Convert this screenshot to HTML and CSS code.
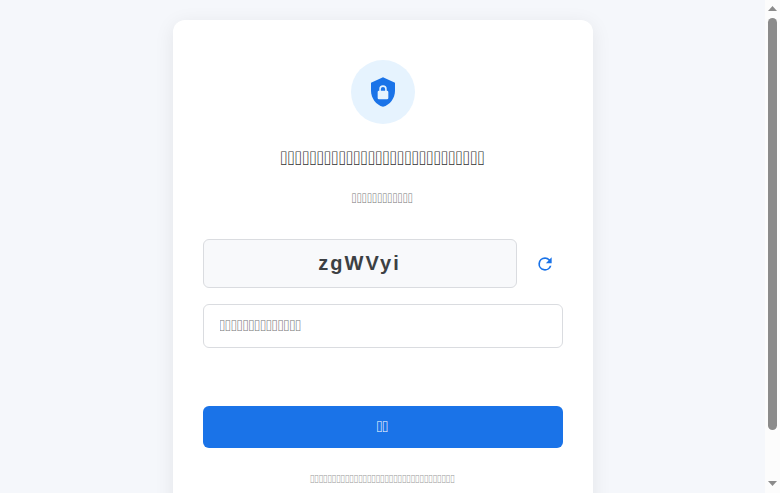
FILE: index.html
```html
<!DOCTYPE html>
<html lang="zh">
<head>
    <meta charset="UTF-8">
    <meta name="viewport" content="width=device-width, initial-scale=1.0">
    <title>Captcha</title>
    <link rel="stylesheet" href="styles.css">
</head>
<body>
    <div class="page">
        <main class="container">
            <div class="logo">
                <svg class="logo-icon" viewBox="0 0 24 24" aria-hidden="true">
                    <path class="shield" d="M12 1 3 5v6c0 5.550 3.840 10.740 9 12 5.160-1.260 9-6.450 9-12V5z"/>
                    <path class="lock" d="M15 11h-.2V9.800a2.800 2.800 0 0 0-5.600 0V11H9a1 1 0 0 0-1 1v4.500a1 1 0 0 0 1 1h6a1 1 0 0 0 1-1V12a1 1 0 0 0-1-1zm-4.600 0V9.800a1.600 1.600 0 0 1 3.200 0V11z"/>
                </svg>
            </div>
            <h1>&#xE000;&#xE000;&#xE000;&#xE000;&#xE000;&#xE000;&#xE000;&#xE000;&#xE000;&#xE000;&#xE000;&#xE000;&#xE000;&#xE000;&#xE000;&#xE000;&#xE000;&#xE000;&#xE000;&#xE000;&#xE000;&#xE000;&#xE000;&#xE000;&#xE000;&#xE000;&#xE000;&#xE000;</h1>
            <p class="subtitle"><label for="captchaInput">&#xE000;&#xE000;&#xE000;&#xE000;&#xE000;&#xE000;&#xE000;&#xE000;&#xE000;&#xE000;&#xE000;&#xE000;</label></p>
            <form class="captcha-form">
                <div class="captcha-row">
                    <div class="captcha-code">zgWVyi</div>
                    <button type="button" class="refresh" aria-label="Refresh">
                        <svg class="refresh-icon" viewBox="0 0 24 24" aria-hidden="true">
                            <path d="M17.650 6.350A7.958 7.958 0 0 0 12 4a8 8 0 1 0 7.730 10h-2.080A6 6 0 1 1 12 6c1.660 0 3.140.69 4.220 1.780L13 11h7V4z"/>
                        </svg>
                    </button>
                </div>
                <input type="text" id="captchaInput" class="captcha-input" placeholder="&#xE000;&#xE000;&#xE000;&#xE000;&#xE000;&#xE000;&#xE000;&#xE000;&#xE000;&#xE000;&#xE000;&#xE000;&#xE000;&#xE000;">
                <p class="message" role="alert"></p>
                <button type="button" class="submit">&#xE000;&#xE000;</button>
            </form>
            <p class="footer">&#xE000;&#xE000;&#xE000;&#xE000;&#xE000;&#xE000;&#xE000;&#xE000;&#xE000;&#xE000;&#xE000;&#xE000;&#xE000;&#xE000;&#xE000;&#xE000;&#xE000;&#xE000;&#xE000;&#xE000;&#xE000;&#xE000;&#xE000;&#xE000;&#xE000;&#xE000;&#xE000;&#xE000;&#xE000;&#xE000;&#xE000;&#xE000;&#xE000;</p>
        </main>
    </div>
    <div class="scrollbar" aria-hidden="true">
        <svg class="arrow" viewBox="0 0 15 17"><path d="M7.500 6 12 11H3z"/></svg>
        <div class="track"><div class="thumb"></div></div>
        <svg class="arrow" viewBox="0 0 15 17"><path d="M3 5h9l-4.500 5z"/></svg>
    </div>
</body>
</html>
```
FILE: styles.css
```css
* {
    box-sizing: border-box;
    margin: 0;
    padding: 0;
}
body {
    font-family: OpenSymbol, "Liberation Sans", Arial, sans-serif;
    background-color: #f5f7fb;
    color: #333;
    height: 100vh;
    display: flex;
    overflow: hidden;
}
.page {
    flex: 1;
    padding: 20px;
    overflow: hidden;
}
.container {
    background-color: white;
    width: 100%;
    max-width: 420px;
    margin: 0 auto;
    padding: 40px 30px;
    border-radius: 12px;
    box-shadow: 0 4px 20px rgba(0, 0, 0, 0.08);
    text-align: center;
}
.logo {
    width: 64px;
    height: 64px;
    margin: 0 auto 22px;
    border-radius: 50%;
    background-color: #e6f3fe;
    display: flex;
    justify-content: center;
    align-items: center;
}
.logo-icon {
    width: 32px;
    height: 32px;
}
.shield {
    fill: #1a73e8;
}
.lock {
    fill: #e6f3fe;
}
h1 {
    font-size: 20px;
    font-weight: 500;
    line-height: 28px;
    margin-bottom: 16px;
}
.subtitle {
    font-size: 14px;
    line-height: 20px;
    color: #777;
    margin-bottom: 29px;
}
.captcha-row {
    display: flex;
    align-items: center;
    gap: 10px;
    margin-bottom: 16px;
}
.captcha-code {
    flex: 1;
    padding: 12px;
    border: 1px solid #dadce0;
    border-radius: 6px;
    background-color: #f8f9fb;
    color: #3c4043;
    font-family: "Liberation Sans", Arial, sans-serif;
    font-size: 20px;
    font-weight: bold;
    line-height: 23px;
    letter-spacing: 2px;
}
.refresh {
    width: 36px;
    height: 36px;
    border: none;
    background: none;
    cursor: pointer;
    display: flex;
    justify-content: center;
    align-items: center;
}
.refresh-icon {
    width: 20px;
    height: 20px;
    fill: #1a73e8;
}
.captcha-input {
    display: block;
    width: 100%;
    height: 44px;
    padding: 14px 16px 12px;
    border: 1px solid #dadce0;
    border-radius: 6px;
    font-family: inherit;
    font-size: 16px;
}
.captcha-input::placeholder {
    color: #757575;
}
.message {
    min-height: 20px;
    margin: 14px 0 24px;
    font-size: 14px;
    color: #d93025;
}
.submit {
    width: 100%;
    height: 42px;
    padding-top: 2px;
    border: none;
    border-radius: 6px;
    background-color: #1a73e8;
    color: white;
    font-family: inherit;
    font-size: 16px;
    cursor: pointer;
}
.submit:hover {
    background-color: #1765cc;
}
.footer {
    margin-top: 25px;
    font-size: 12px;
    line-height: 16px;
    color: #999;
}
.scrollbar {
    width: 15px;
    background-color: #fcfcfc;
    display: flex;
    flex-direction: column;
}
.arrow {
    width: 15px;
    height: 17px;
    fill: #8b8b8b;
}
.track {
    flex: 1;
    padding: 1px 3px 0;
}
.thumb {
    height: 90%;
    border-radius: 5px;
    background-color: #8b8b8b;
}
```
